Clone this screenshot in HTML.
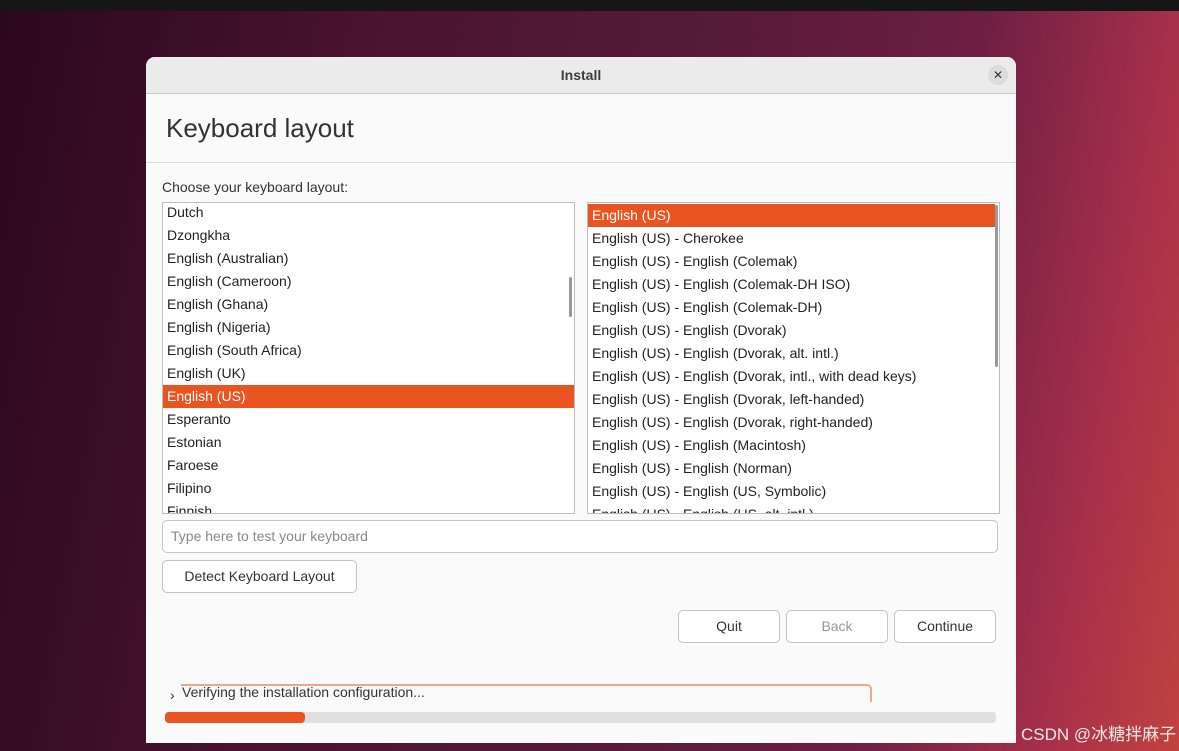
<!DOCTYPE html><html><head><style>
html,body{margin:0;width:1179px;height:751px;overflow:hidden}
body{position:relative;font-family:"Liberation Sans","Noto Sans CJK SC",sans-serif;background:linear-gradient(100deg,#2c0720 0%,#4a1432 30%,#561a3a 55%,#6d1e44 75%,#a8304a 90%,#c0423f 100%);}
.top{position:absolute;left:0;top:0;width:1179px;height:11px;background:#161616}
.win{position:absolute;left:146px;top:57px;width:870px;height:686px;background:#fafafa;border-radius:9px 9px 0 0;overflow:hidden}
.tb{height:36px;background:#ebebeb;border-bottom:1px solid #c8c8c8;text-align:center;line-height:37px;font-size:14px;font-weight:bold;color:#3d3d3d}
.x{position:absolute;right:8px;top:8px;width:20px;height:20px;border-radius:50%;background:#dcdcdc;text-align:center;line-height:20px;font-size:12px;color:#333}
h1{position:absolute;left:20px;top:56px;margin:0;font-weight:normal;font-size:26px;color:#333}
.hr{position:absolute;left:0;top:105px;width:870px;height:1px;background:#dadada}
.lbl{position:absolute;left:16px;top:122px;font-size:14px;color:#333}
.list{position:absolute;top:145px;height:310px;border:1px solid #bdbdbd;background:#fff;overflow:hidden;font-size:14px;color:#222}
.list div{height:23px;line-height:23px;padding-left:4px;white-space:nowrap}
.list .s{background:#e95420;color:#fff}
.sb{position:absolute;width:3px;background:#9a9a9a;border-radius:2px}
.in{position:absolute;left:16px;top:463px;width:836px;height:33px;box-sizing:border-box;border:1px solid #c6c6c6;border-radius:5px;background:#fff;font-size:14px;color:#888;line-height:31px;padding-left:8px}
.btn{position:absolute;height:31px;border:1px solid #c3c3c3;border-radius:5px;background:#fff;font-size:14px;color:#333;text-align:center;line-height:31px}
</style></head><body>
<div class="top"></div>
<div class="win">
<div class="tb">Install</div><div class="x">✕</div>
<h1>Keyboard layout</h1><div class="hr"></div>
<div class="lbl">Choose your keyboard layout:</div>
<div class="list" style="left:16px;width:411px;top:145px">
<div style="margin-top:-2px">Dutch</div><div>Dzongkha</div><div>English (Australian)</div><div>English (Cameroon)</div><div>English (Ghana)</div><div>English (Nigeria)</div><div>English (South Africa)</div><div>English (UK)</div><div class="s">English (US)</div><div>Esperanto</div><div>Estonian</div><div>Faroese</div><div>Filipino</div><div>Finnish</div>
<span class="sb" style="left:406px;top:74px;height:40px"></span></div>
<div class="list" style="left:441px;width:411px">
<div class="s" style="margin-top:1px;margin-right:4px">English (US)</div><div>English (US) - Cherokee</div><div>English (US) - English (Colemak)</div><div>English (US) - English (Colemak-DH ISO)</div><div>English (US) - English (Colemak-DH)</div><div>English (US) - English (Dvorak)</div><div>English (US) - English (Dvorak, alt. intl.)</div><div>English (US) - English (Dvorak, intl., with dead keys)</div><div>English (US) - English (Dvorak, left-handed)</div><div>English (US) - English (Dvorak, right-handed)</div><div>English (US) - English (Macintosh)</div><div>English (US) - English (Norman)</div><div>English (US) - English (US, Symbolic)</div><div>English (US) - English (US, alt. intl.)</div>
<span class="sb" style="left:407px;top:2px;height:162px"></span></div>
<div class="in">Type here to test your keyboard</div>
<div class="btn" style="left:16px;top:503px;width:193px">Detect Keyboard Layout</div>
<div class="btn" style="left:532px;top:553px;width:100px">Quit</div>
<div class="btn" style="left:640px;top:553px;width:100px;color:#999">Back</div>
<div class="btn" style="left:748px;top:553px;width:100px">Continue</div>
<div style="position:absolute;left:35px;top:627px;width:689px;height:16px;border-top:2px solid #f3a58a;border-right:2px solid #f3a58a;border-radius:0 5px 0 0"></div>
<div style="position:absolute;left:24px;top:630px;font-size:14px;color:#333">›</div>
<div style="position:absolute;left:36px;top:627px;font-size:14px;color:#333">Verifying the installation configuration...</div>
<div style="position:absolute;left:19px;top:655px;width:831px;height:11px;background:#e0e0e0;border-radius:3px"></div>
<div style="position:absolute;left:19px;top:655px;width:140px;height:11px;background:#e95420;border-radius:4px"></div>
</div>
<div style="position:absolute;left:1021px;top:720px;font-size:17px;color:#e8e8e8;white-space:nowrap">CSDN @冰糖拌麻子</div>
</body></html>
